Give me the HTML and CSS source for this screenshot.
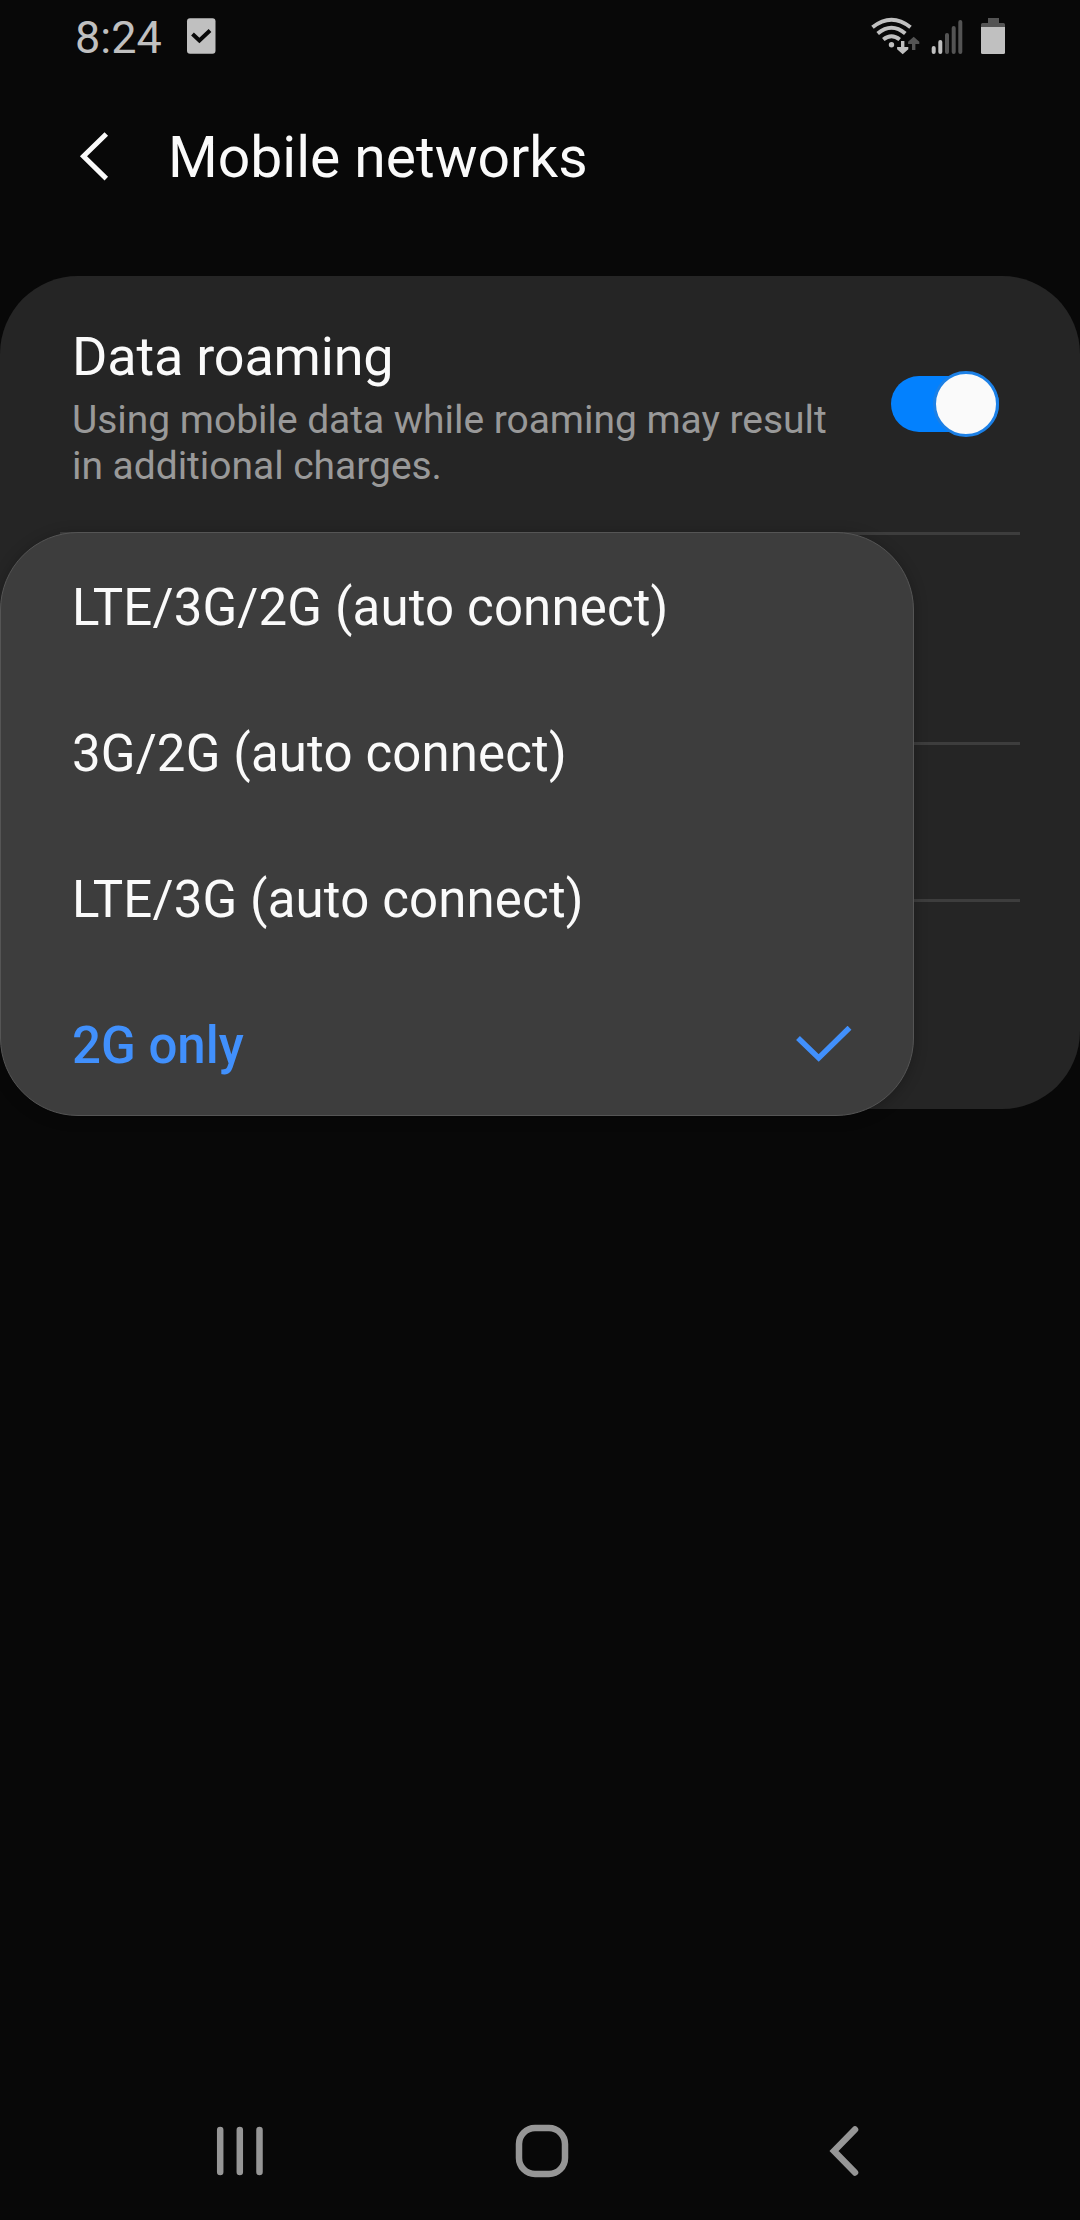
FILE: index.html
```html
<!DOCTYPE html>
<html lang="en">
<head>
<meta charset="utf-8">
<title>Mobile networks</title>
<link rel="stylesheet" href="styles.css">
</head>
<body>
<div class="screen">
  <header class="status-bar">
    <span class="clock">8:24</span>
    <svg class="task-icon" width="30" height="38" viewBox="0 0 30 38">
      <rect x="1" y="1.300" width="28.500" height="35.500" rx="3"/>
      <path d="M6.500 17l6.900 6.500L24 13.500"/>
    </svg>
    <svg class="system-icons" width="140" height="38" viewBox="870 17 140 38">
      <g class="wifi">
        <path d="M872.500 27.300Q891.500 12.300 910.500 27.300"/>
        <path d="M877.700 33.500Q891.500 22 905.300 33.500"/>
        <path d="M883.300 39.500Q891.500 33 899.700 39.500"/>
      </g>
      <circle class="lit" cx="891.500" cy="44.700" r="2.700"/>
      <path class="lit" d="M901 41h3.400v6h3.900v2.200l-5.600 5-5.600-5V47h3.900z"/>
      <path class="dim" d="M912 50h3.400v-6h3.900v-2.200l-5.600-5-5.600 5V44h3.900z"/>
      <rect class="lit" x="931.700" y="46" width="4" height="8" rx="2"/>
      <rect class="lit" x="938.300" y="40" width="4" height="14" rx="2"/>
      <rect class="dim" x="945" y="33" width="4" height="21" rx="2"/>
      <rect class="dim" x="951.700" y="26" width="4" height="28" rx="2"/>
      <rect class="dim" x="958.300" y="20" width="4" height="34" rx="2"/>
      <path class="dim" d="M988 18h11v5h4.500q1.500 0 1.500 1.500V27h-24v-2.500q0-1.500 1.500-1.500h5.500z"/>
      <path class="lit" d="M981 27h24v25.500q0 1.500-1.500 1.500h-21q-1.500 0-1.500-1.500z"/>
    </svg>
  </header>

  <div class="title-bar">
    <svg class="back" width="32" height="50" viewBox="0 0 32 50"><path d="M27.300 2L4.500 24.300l22.800 22.300"/></svg>
    <h1 class="title">Mobile networks</h1>
  </div>

  <main class="card">
    <section class="setting setting-roaming">
      <div class="setting-text">
        <h2 class="setting-name">Data roaming</h2>
        <p class="setting-note">Using mobile data while roaming may result in additional charges.</p>
      </div>
      <div class="switch"><span class="thumb"></span></div>
    </section>
    <section class="setting setting-mode"></section>
    <section class="setting setting-apn"></section>
    <section class="setting setting-operators"></section>

    <ul class="menu">
      <li class="option">LTE/3G/2G (auto connect)</li>
      <li class="option">3G/2G (auto connect)</li>
      <li class="option">LTE/3G (auto connect)</li>
      <li class="option selected">2G only
        <svg class="check" width="58" height="40" viewBox="0 0 58 40"><path d="M2 12L22.700 32 53.500 1.700"/></svg>
      </li>
    </ul>
  </main>

  <nav class="nav-bar">
    <svg class="nav-icon" width="48" height="52" viewBox="0 0 48 52"><path d="M4.200 5v42M23.800 5v42M43.500 5v42"/></svg>
    <svg class="nav-icon nav-home" width="54" height="54" viewBox="0 0 54 54"><rect x="4" y="4" width="46" height="46" rx="16"/></svg>
    <svg class="nav-icon nav-back" width="32" height="52" viewBox="0 0 32 52"><path d="M26 4.500L5 26l21 21.500"/></svg>
  </nav>
</div>
</body>
</html>
```
FILE: styles.css
```css
* { box-sizing: border-box; }
body {
  margin: 0;
  background: #080808;
  color: #fafafa;
  font-family: Roboto, "Liberation Sans", sans-serif;
}
h1, h2, p, ul { margin: 0; padding: 0; font-weight: 400; }
svg { display: block; flex: none; fill: none; }

.screen { display: flex; flex-direction: column; width: 1080px; height: 2220px; }

.status-bar { display: flex; align-items: flex-start; height: 75px; padding: 17px 70px 0 75px; }
.clock { width: 111px; font-size: 45px; line-height: 42px; color: #c0c0c0; }
.task-icon rect { fill: #c0c0c0; }
.task-icon path { stroke: #080808; stroke-width: 4; }
.system-icons { margin-left: auto; }
.wifi { stroke: #c0c0c0; stroke-width: 4; }
.lit { fill: #c0c0c0; }
.dim { fill: #545454; }

.title-bar { display: flex; align-items: center; height: 201px; padding: 0 0 35px 79px; }
.back { margin-bottom: 2px; }
.back path { stroke: #fafafa; stroke-width: 5; }
.title { margin-left: 57px; font-size: 57px; line-height: 68px; }

.card { position: relative; height: 833px; border-radius: 78px; background: #252525; }
.setting { margin: 0 60px; border-bottom: 3px solid #3d3d3d; }
.setting:last-of-type { border-bottom: 0; }
.setting-roaming { display: flex; justify-content: space-between; height: 259px; padding: 49px 21px 0 12px; }
.setting-text { width: 780px; }
.setting-name { font-size: 54px; line-height: 64px; letter-spacing: -0.2px; }
.setting-note { margin-top: 8px; font-size: 39px; line-height: 46px; letter-spacing: -0.04px; color: #999; }
.setting-mode { height: 210px; }
.setting-apn { height: 157px; }
.setting-operators { height: 206px; }

.switch { display: flex; justify-content: flex-end; align-items: center; width: 108px; height: 56px; margin-top: 51px; border-radius: 28px; background: #0381fe; }
.thumb { flex: none; width: 66px; height: 66px; border: 3px solid #1c80e6; border-radius: 50%; background: #fafafa; }

.menu {
  position: absolute;
  left: 0;
  top: 256px;
  width: 914px;
  height: 584px;
  border: 1px solid #555;
  border-radius: 78px;
  background: #3d3d3d;
  box-shadow: 0 2px 14px rgba(0, 0, 0, .25);
  list-style: none;
}
.option { display: flex; align-items: center; justify-content: space-between; height: 146px; padding: 3px 59px 0 71px; font-size: 51px; line-height: 60px; letter-spacing: 0.14px; }
.selected { color: #4190fc; font-weight: 500; letter-spacing: 0; }
.check path { stroke: #4190fc; stroke-width: 5.500; }

.nav-bar { display: flex; align-items: center; height: 138px; margin-top: auto; padding-left: 216px; }
.nav-icon { stroke: #969696; stroke-width: 6.500; stroke-linecap: round; }
.nav-home { margin-left: 251px; }
.nav-back { margin-left: 260px; }
```
